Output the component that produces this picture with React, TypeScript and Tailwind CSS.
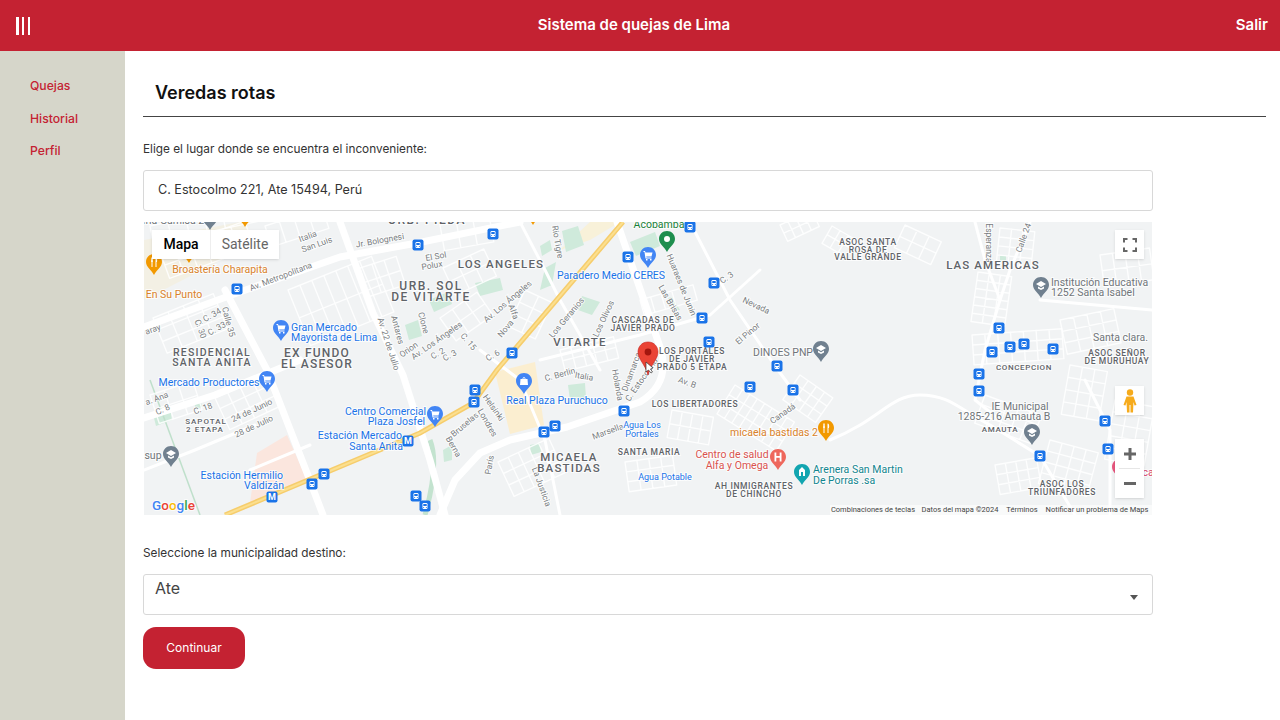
const RED = "#c42232";

type Label = [string, number, number, number?, string?];

// [text, cx, cy, rotate]
const streets: Label[] = [
  ["Av. Metropolitana", 281, 277, -21],
  ["Italia", 308, 237, -20],
  ["San Luis", 317, 245, -20],
  ["Jr. Bolognesi", 380, 241, -10],
  ["El Sol", 436, 257, -10],
  ["Polux", 432, 266, -10],
  ["Av. 22 de Julio", 388, 344, 72],
  ["Antares", 397, 330, 75],
  ["Clone", 423, 323, 75],
  ["Orion", 409, 350, -35],
  ["Av. Los Ángeles", 437, 341, -35],
  ["C. 2", 438, 354, -30],
  ["C. 3", 450, 356, -30],
  ["C. 15", 468, 342, 50],
  ["C. C. 34", 208, 318, -30],
  ["C. 33", 217, 329, -30],
  ["C. 30", 200, 329, 70],
  ["Calle 35", 228, 322, 75],
  ["aray", 153, 330, -20],
  ["a. Ana", 157, 399, -20],
  ["C. 8", 163, 410, -25],
  ["C. 18", 203, 409, -20],
  ["24 de Junio", 252, 411, -25],
  ["28 de Julio", 254, 427, -25],
  ["Bruselas", 465, 425, -40],
  ["Berna", 453, 447, 60],
  ["Rio Tigre", 557, 242, 80],
  ["Huaraes de Junin", 681, 285, 68],
  ["Las Brisas", 670, 303, 60],
  ["C. 3", 727, 278, -35],
  ["Nevada", 756, 306, 25],
  ["El Pinor", 748, 334, -40],
  ["Los Geranios", 567, 318, -50],
  ["Los Olivos", 604, 319, -65],
  ["Av. Los Ángeles", 508, 302, -40],
  ["Alfa", 513, 312, 70],
  ["Nova", 506, 329, -50],
  ["C. 6", 493, 356, -30],
  ["C. Berlin", 560, 375, -15],
  ["Italia", 584, 377, 10],
  ["Holanda", 617, 385, 80],
  ["Dinamarca", 632, 372, -70],
  ["C. Estocolmo", 642, 380, -55],
  ["Av. B", 687, 383, 20],
  ["Canadá", 783, 414, -35],
  ["Marsella", 608, 432, -20],
  ["La Justicia", 541, 487, 70],
  ["París", 490, 465, -80],
  ["Helsinki", 493, 408, 55],
  ["Londres", 487, 423, 60],
  ["Esperanza", 988, 243, 90],
  ["Calle 24", 1024, 238, -70],
];

// [text, cx, cy, font size, spacing]
const areas: [string, number, number, number, number][] = [
  ["URB. PIEDA", 427, 221, 12, 1.5],
  ["LOS ANGELES", 501, 265, 11.5, 1.2],
  ["URB. SOL", 431, 287, 12, 1.5],
  ["DE VITARTE", 431, 298, 12, 1.5],
  ["RESIDENCIAL", 212, 353, 10.5, 1.2],
  ["SANTA ANITA", 212, 363, 10.5, 1.2],
  ["EX FUNDO", 317, 354, 12, 1.2],
  ["EL ASESOR", 317, 365, 12, 1.2],
  ["SAPOTAL", 206, 422, 8, 1],
  ["2 ETAPA", 205, 430, 8, 1],
  ["CASCADAS DE", 643, 321, 8.5, 0.6],
  ["JAVIER PRADO", 643, 329, 8.5, 0.6],
  ["VITARTE", 580, 343, 11.5, 1.2],
  ["LOS PORTALES", 692, 352, 8.5, 0.6],
  ["DE JAVIER", 692, 360, 8.5, 0.6],
  ["PRADO 5 ETAPA", 692, 368, 8.5, 0.6],
  ["LOS LIBERTADORES", 695, 405, 8.5, 0.6],
  ["SANTA MARIA", 649, 453, 8.5, 0.6],
  ["AH INMIGRANTES", 754, 487, 8.5, 0.6],
  ["DE CHINCHO", 754, 495, 8.5, 0.6],
  ["MICAELA", 569, 458, 11.5, 1.2],
  ["BASTIDAS", 569, 468.5, 11.5, 1.2],
  ["ASOC SANTA", 868, 243, 8.5, 0.6],
  ["ROSA DE", 868, 250.5, 8.5, 0.6],
  ["VALLE GRANDE", 868, 258, 8.5, 0.6],
  ["LAS AMERICAS", 993, 266, 11.5, 1.1],
  ["ASOC SEÑOR", 1117, 354, 8.5, 0.6],
  ["DE MURUHUAY", 1117, 361.5, 8.5, 0.6],
  ["CONCEPCION", 1024, 368, 8, 0.6],
  ["AMAUTA", 1000, 430, 8, 0.6],
  ["ASOC LOS", 1062, 485, 8.5, 0.6],
  ["TRIUNFADORES", 1062, 492.5, 8.5, 0.6],
];

const BLUE = "#1a73e8";
const ORANGE = "#d9822b";
const GREY = "#70757a";
const TEAL = "#12858f";
const ROSE = "#d9534f";

// [text, x, cy, colour, anchor, size]
const places: [string, number, number, string, "start" | "middle" | "end", number?][] = [
  ["ería Gamisa 2", 172, 221, GREY, "middle"],
  ["Broastería Charapita", 220, 270, ORANGE, "middle"],
  ["En Su Punto", 174, 295, ORANGE, "middle"],
  ["Gran Mercado", 291, 328, BLUE, "start"],
  ["Mayorista de Lima", 291, 338, BLUE, "start"],
  ["Mercado Productores", 209, 383, BLUE, "middle"],
  ["sup", 153, 456, GREY, "middle"],
  ["Estación Hermilio", 283, 476, BLUE, "end"],
  ["Valdizán", 284, 486, BLUE, "end"],
  ["Centro Comercial", 426, 412, BLUE, "end"],
  ["Plaza Josfel", 425, 422, BLUE, "end"],
  ["Estación Mercado", 402, 436.5, BLUE, "end"],
  ["Santa Anita", 403, 447, BLUE, "end"],
  ["Acobamba", 659, 225, "#188038", "middle"],
  ["Paradero Medio CERES", 611, 276, BLUE, "middle"],
  ["DINOES PNP", 783, 353, GREY, "middle"],
  ["Real Plaza Puruchuco", 557, 401, BLUE, "middle"],
  ["micaela bastidas 2", 774, 433, ORANGE, "middle"],
  ["Agua Los", 642, 426, BLUE, "middle", 9],
  ["Portales", 642, 434.5, BLUE, "middle", 9],
  ["Centro de salud", 732, 455, ROSE, "middle"],
  ["Alfa y Omega", 737, 466, ROSE, "middle"],
  ["Agua Potable", 665, 478, BLUE, "middle", 9],
  ["Arenera San Martin", 813, 470, TEAL, "start"],
  ["De Porras .sa", 813, 481, TEAL, "start"],
  ["Institución Educativa", 1051, 283, GREY, "start"],
  ["1252 Santa Isabel", 1051, 293, GREY, "start"],
  ["Santa clara.", 1093, 338, GREY, "start"],
  ["IE Municipal", 1020, 407, GREY, "middle"],
  ["1285-216 Amauta B", 1004, 417.5, GREY, "middle"],
  ["ca", 1148, 473, "#d6456b", "middle"],
];

const busStops = [
  [493, 234], [690, 227], [628, 257], [714, 283], [702, 318], [709, 342], [512, 353], [777, 366],
  [750, 387], [793, 390], [624, 411], [555, 426], [544, 432], [475, 390], [474, 402], [324, 474],
  [312, 484], [416, 496], [425, 506], [418, 245], [237, 289], [999, 328], [1010, 347], [1024, 344],
  [992, 352], [1053, 349], [979, 374], [979, 391], [1105, 421], [1108, 449], [1040, 456],
];

// main roads, wide white bands
const roads = [
  "M144 327 L237 293 L340 257 L417 243 L520 222",
  "M340 222 L373 313 L403 375 L430 460 L445 515",
  "M225 290 L267 370 L307 473 L323 515",
  "M617 222 L660 347 C668 372 660 390 640 402 L567 427 L510 440 L480 453 L455 480 L440 515",
  "M144 418 L215 395 L300 360",
];

const lanes = [
  "M690 222 L730 300 L775 366 L800 400",
  "M520 222 L545 270 L560 300 L600 370",
  "M480 350 L520 380 L545 440 L560 515",
  "M540 360 L640 335 L710 315 L760 270",
  "M830 440 C880 420 890 395 920 395 C950 395 960 410 990 425 L1040 456 L1075 515",
  "M975 222 L985 260 L1000 300 L985 350 L975 400 L1000 420",
  "M1030 222 L1010 270 L1000 300",
  "M1040 300 L1152 310",
  "M1085 380 L1110 430 L1110 515",
  "M144 470 L195 450 L255 425",
  "M250 470 L310 445",
];

// a small rotated street grid, returned as one path
function mesh(x: number, y: number, w: number, h: number, rot: number, nx: number, ny: number) {
  const a = (rot * Math.PI) / 180;
  const pt = (u: number, v: number) => `${(x + u * Math.cos(a) - v * Math.sin(a)).toFixed(1)} ${(y + u * Math.sin(a) + v * Math.cos(a)).toFixed(1)}`;
  let d = "";
  for (let i = 0; i <= nx; i++) d += `M${pt((w * i) / nx, 0)} L${pt((w * i) / nx, h)} `;
  for (let j = 0; j <= ny; j++) d += `M${pt(0, (h * j) / ny)} L${pt(w, (h * j) / ny)} `;
  return d;
}

const meshes = [
  // right hand hills
  mesh(978, 272, 34, 50, 8, 3, 6),
  mesh(972, 335, 90, 30, -4, 7, 3),
  mesh(1060, 320, 55, 35, -12, 4, 3),
  mesh(985, 395, 60, 30, 20, 5, 3),
  mesh(1050, 440, 50, 45, 15, 4, 4),
  mesh(995, 465, 42, 30, -10, 4, 3),
  mesh(1070, 365, 38, 50, 10, 3, 4),
  mesh(1000, 228, 35, 36, 6, 3, 4),
  mesh(1115, 400, 40, 60, 10, 3, 5),
  mesh(1100, 255, 50, 32, -8, 4, 2),
  // upper middle hills
  mesh(832, 226, 28, 20, 30, 3, 2),
  mesh(905, 225, 40, 25, 25, 3, 2),
  mesh(780, 225, 35, 18, -25, 4, 2),
  // libertadores
  mesh(735, 385, 70, 34, 32, 8, 3),
  mesh(800, 375, 40, 30, 35, 4, 3),
  mesh(672, 410, 42, 28, 10, 4, 2),
  // santa maria
  mesh(625, 462, 48, 30, -8, 4, 3),
  mesh(498, 462, 56, 38, -25, 5, 3),
  // vitarte
  mesh(560, 350, 55, 22, -14, 5, 2),
  mesh(640, 300, 55, 16, -16, 5, 1),
  mesh(525, 290, 30, 40, 25, 2, 3),
  mesh(440, 318, 45, 28, -35, 3, 2),
  mesh(443, 268, 45, 30, -25, 3, 2),
  mesh(360, 268, 38, 30, -18, 3, 2),
  // west blocks
  mesh(288, 290, 90, 60, -22, 7, 2),
  mesh(153, 318, 65, 38, -22, 4, 3),
  mesh(215, 398, 55, 35, -25, 4, 3),
  mesh(160, 252, 90, 28, -20, 6, 2),
  mesh(150, 226, 110, 18, -12, 6, 1),
  mesh(265, 226, 60, 22, -18, 4, 1),
  mesh(150, 395, 45, 30, -18, 3, 2),
  mesh(440, 225, 50, 26, -10, 3, 2),
];

const blocks = [
  "M475 283 L500 278 L503 290 L480 296 Z",
  "M562 231 L578 226 L584 245 L566 252 Z",
  "M630 242 L655 232 L660 246 L636 256 Z",
  "M545 268 L556 262 L552 285 L540 290 Z",
  "M582 296 L600 302 L592 315 L578 310 Z",
  "M540 246 L550 240 L552 250 L542 256 Z",
  "M429 300 L448 292 L452 304 L434 312 Z",
  "M405 325 L418 320 L422 336 L409 340 Z",
  "M153 414 L170 408 L172 420 L156 426 Z",
  "M193 400 L200 398 L202 407 L196 409 Z",
  "M530 445 L540 443 L541 452 L531 455 Z",
  "M568 385 L585 383 L586 398 L570 400 Z",
  "M443 450 L452 445 L452 460 L444 462 Z",
  "M1000 256 L1006 256 L1006 262 L1000 262 Z",
  "M675 310 L668 298 L672 297 L680 310 Z",
];

// teardrop with tip at (x, y)
function Pin({ x, y, fill, glyph }: { x: number; y: number; fill: string; glyph: string }) {
  return (
    <g transform={`translate(${x - 8} ${y - 21})`}>
      <path d="M8 0 C3.5 0 0 3.5 0 8 C0 13 5.5 16 8 21 C10.5 16 16 13 16 8 C16 3.5 12.5 0 8 0 Z" fill={fill} />
      <path d={glyph} fill="#fff" />
    </g>
  );
}

const CART = "M3.5 4 H5 L5.5 5.5 H12.5 L11.5 9.5 H6.2 L6.5 10.5 H11.5 V11.5 H5.5 L4.5 5 H3.5 Z M6 12 h1.5 v1.5 h-1.5 Z M10 12 h1.5 v1.5 h-1.5 Z";
const CAP = "M8 4 L13 7 L8 10 L3 7 Z M5 9.5 L8 11.3 L11 9.5 V11.5 L8 13 L5 11.5 Z";
const DOT = "M8 5 A3 3 0 1 0 8 11 A3 3 0 1 0 8 5 Z";
const FORK = "M5 3.5 H5.7 V6.5 H6.3 V3.5 H7 V7.5 L6.5 8 V13 H5.5 V8 L5 7.5 Z M9.5 3.5 C11 3.5 11.5 5.5 11 8 H10.5 V13 H9.5 Z";
const BAG = "M4.5 6 H11.5 L12 12 H4 Z M6.5 6 C6.5 3.5 9.5 3.5 9.5 6 H8.8 C8.8 4.5 7.2 4.5 7.2 6 Z";
const HOSP = "M4.5 3.5 H6.3 V7 H9.7 V3.5 H11.5 V12.5 H9.7 V8.7 H6.3 V12.5 H4.5 Z";
const CHURCH = "M8 3 L11 6 V12 H5 V6 Z M7 8 V12 H9 V8 Z";

function BusStop({ x, y }: { x: number; y: number }) {
  return (
    <g transform={`translate(${x - 5.5} ${y - 5.5})`}>
      <rect width="11" height="11" rx="2" fill={BLUE} />
      <rect x="3" y="2.5" width="5" height="6" rx="1.2" fill="#fff" />
      <rect x="3.8" y="3.5" width="3.4" height="2" fill={BLUE} />
      <rect x="3.7" y="6.6" width="0.9" height="0.9" fill={BLUE} />
      <rect x="6.4" y="6.6" width="0.9" height="0.9" fill={BLUE} />
    </g>
  );
}

function MapDrawing() {
  const halo = { paintOrder: "stroke" as const, stroke: "#fff", strokeWidth: 2, strokeOpacity: 0.75 };
  return (
    <svg viewBox="144 222 1008 293" className="block h-full w-full bg-[#f1f3f4] font-['Roboto',sans-serif]">
      <path d="M495 372 L535 362 L544 425 L510 434 Z" fill="#fbeed0" />
      <path d="M620 222 L590 222 L560 250 L590 240 Z" fill="#f8f1d9" />
      <path d="M257 453 L287 435 L307 480 L250 503 Z" fill="#fbe6de" />
      <path d="M144 240 L240 222 L260 240 L144 300 Z" fill="#f3f0e4" />
      {blocks.map((d) => (
        <path key={d} d={d} fill="#cfeadb" />
      ))}
      <path d="M150 380 L200 515" stroke="#bfe0cb" strokeWidth="1.5" fill="none" />
      <path d="M425 515 C432 490 438 460 430 440" stroke="#c3e3cf" strokeWidth="5" fill="none" />
      <g fill="none" stroke="#fff" strokeLinejoin="round" strokeLinecap="round">
        {meshes.map((d) => (
          <path key={d} d={d} strokeWidth="1.4" strokeOpacity="0.85" />
        ))}
        {lanes.map((d) => (
          <path key={d} d={d} strokeWidth="3" />
        ))}
        {roads.map((d) => (
          <path key={d} d={d} strokeWidth="7" />
        ))}
      </g>
      <path d="M225 515 L420 433 L473 403 L497 370 L623 222" fill="none" stroke="#f6cd6c" strokeWidth="5" />
      <path d="M225 515 L420 433 L473 403 L497 370 L623 222" fill="none" stroke="#fbdf8f" strokeWidth="2" />

      {streets.map(([text, x, y, rot]) => (
        <text
          key={`${text}${x}`}
          x={x}
          y={y}
          transform={`rotate(${rot} ${x} ${y})`}
          textAnchor="middle"
          dominantBaseline="middle"
          fontSize="8.5"
          fill="#7a7e82"
          style={halo}
        >
          {text}
        </text>
      ))}
      {areas.map(([text, x, y, size, gap]) => (
        <text
          key={text}
          x={x}
          y={y}
          textAnchor="middle"
          dominantBaseline="middle"
          fontSize={size}
          fontWeight="500"
          letterSpacing={gap}
          fill="#5f6368"
          style={halo}
        >
          {text}
        </text>
      ))}
      {places.map(([text, x, y, color, anchor, size]) => (
        <text
          key={`${text}${x}`}
          x={x}
          y={y}
          textAnchor={anchor}
          dominantBaseline="middle"
          fontSize={size ?? 10.5}
          fill={color}
          style={halo}
        >
          {text}
        </text>
      ))}

      {busStops.map(([x, y]) => (
        <BusStop key={`${x}-${y}`} x={x} y={y} />
      ))}
      {[[408, 441], [272, 497]].map(([x, y]) => (
        <g key={x}>
          <rect x={x - 5.5} y={y - 5.5} width="11" height="11" rx="2" fill={BLUE} />
          <text x={x} y={y + 0.5} textAnchor="middle" dominantBaseline="middle" fontSize="9" fontWeight="700" fill="#fff">
            M
          </text>
        </g>
      ))}

      <Pin x={210} y={230} fill="#70808f" glyph={CAP} />
      <Pin x={245} y={227} fill="#f29900" glyph={FORK} />
      <Pin x={533} y={225} fill="#f29900" glyph={FORK} />
      <Pin x={189} y={263} fill="#f29900" glyph={FORK} />
      <Pin x={154} y={275} fill="#f29900" glyph={FORK} />
      <Pin x={281} y={341} fill="#4285f4" glyph={CART} />
      <Pin x={267} y={392} fill="#4285f4" glyph={CART} />
      <Pin x={171} y={467} fill="#70808f" glyph={CAP} />
      <Pin x={435} y={427} fill="#4285f4" glyph={CART} />
      <Pin x={667} y={252} fill="#1e8e4e" glyph={DOT} />
      <Pin x={648} y={268} fill="#4285f4" glyph={CART} />
      <Pin x={821} y={362} fill="#70808f" glyph={CAP} />
      <Pin x={524} y={394} fill="#4285f4" glyph={BAG} />
      <Pin x={826} y={441} fill="#f29900" glyph={FORK} />
      <Pin x={778} y={470} fill="#ee675c" glyph={HOSP} />
      <Pin x={802} y={485} fill="#12a5b0" glyph={CHURCH} />
      <Pin x={1041} y={298} fill="#70808f" glyph={CAP} />
      <Pin x={1032} y={445} fill="#70808f" glyph={CAP} />
      <Pin x={1120} y={480} fill="#e8577e" glyph="" />

      {/* selected place */}
      <path
        d="M648 342 C641.5 342 638 347 638 352 C638 359 645 364 648 375 C651 364 658 359 658 352 C658 347 654.5 342 648 342 Z"
        fill="#ea4335"
        stroke="#c5221f"
        strokeWidth="0.6"
      />
      <circle cx="648" cy="352" r="3.4" fill="#a3160f" />
      <path d="M646 362 L646 372 L648.5 370 L651 373 L652.5 372 L650.5 369 L653 368 Z" fill="#fff" stroke="#333" strokeWidth="0.7" />

      {/* logo */}
      <text x="152" y="510" fontSize="13.5" fontWeight="500" style={halo}>
        <tspan fill="#4285f4">G</tspan>
        <tspan fill="#ea4335">o</tspan>
        <tspan fill="#fbbc04">o</tspan>
        <tspan fill="#4285f4">g</tspan>
        <tspan fill="#34a853">l</tspan>
        <tspan fill="#ea4335">e</tspan>
      </text>

      <rect x="830" y="505" width="322" height="10" fill="#fff" fillOpacity="0.55" />
      {[
        ["Combinaciones de teclas", 873],
        ["Datos del mapa ©2024", 960],
        ["Términos", 1022],
        ["Notificar un problema de Maps", 1097],
      ].map(([text, x]) => (
        <text key={text} x={x} y={510.5} textAnchor="middle" dominantBaseline="middle" fontSize="7.5" fill="#444">
          {text}
        </text>
      ))}
    </svg>
  );
}

function MapControls() {
  return (
    <>
      <div className="absolute left-[8px] top-[8px] flex h-[29px] bg-white font-['Roboto',sans-serif] text-[14px] shadow-sm">
        <div className="flex w-[58px] items-center justify-center font-medium text-black">Mapa</div>
        <div className="flex w-[69px] items-center justify-center border-l border-[#eee] text-[#666]">Satélite</div>
      </div>
      <div className="absolute right-[8px] top-[8px] flex h-[29px] w-[29px] items-center justify-center bg-white shadow-sm">
        <svg width="14" height="14" viewBox="0 0 14 14" fill="none" stroke="#666" strokeWidth="2">
          <path d="M1 4.5 V1 H4.5 M9.5 1 H13 V4.5 M1 9.5 V13 H4.5 M9.5 13 H13 V9.5" />
        </svg>
      </div>
      <div className="absolute bottom-[17px] right-[8px] flex w-[29px] flex-col gap-[24px]">
        <div className="flex h-[29px] items-center justify-center bg-white shadow-sm">
          <svg width="14" height="24" viewBox="0 0 14 24" fill="#f6ab1c">
            <circle cx="7" cy="3.5" r="3.2" />
            <path d="M3.5 7.5 H10.5 L13.5 16 L11.5 16.5 L10.5 13 L10 23.5 H7.5 V16 H6.5 V23.5 H4 L3.5 13 L2.5 16.5 L0.5 16 Z" />
          </svg>
        </div>
        <div className="flex h-[59px] flex-col items-center bg-white shadow-sm">
          <div className="flex h-[29px] w-full items-center justify-center">
            <svg width="14" height="14" viewBox="0 0 14 14" fill="#666">
              <path d="M5.5 1 H8.5 V5.5 H13 V8.5 H8.5 V13 H5.5 V8.5 H1 V5.5 H5.5 Z" />
            </svg>
          </div>
          <div className="h-px w-[21px] bg-[#e6e6e6]" />
          <div className="flex h-[29px] w-full items-center justify-center">
            <div className="h-[3px] w-[12px] bg-[#666]" />
          </div>
        </div>
      </div>
    </>
  );
}

export default function App() {
  return (
    <div className="flex h-screen flex-col overflow-hidden bg-white font-['Inter',sans-serif] text-[#333]">
      <header className="flex h-[51px] shrink-0 items-center justify-between bg-[#c42232] pl-[16px] pr-[12px] text-white">
        <div className="flex h-[18px] w-[14px] justify-between">
          <span className="w-[2.5px] bg-white" />
          <span className="w-[2.5px] bg-white" />
          <span className="w-[2.5px] bg-white" />
        </div>
        <h1 className="ml-[2px] text-[15px] font-semibold">Sistema de quejas de Lima</h1>
        <a className="text-[15px] font-semibold">Salir</a>
      </header>

      <div className="flex min-h-0 flex-1">
        <aside className="flex w-[125px] shrink-0 flex-col gap-[12.5px] bg-[#d6d6ca] pl-[30px] pt-[25px] text-[12.2px] font-medium" style={{ color: RED }}>
          <a className="leading-[20px]">Quejas</a>
          <a className="leading-[20px]">Historial</a>
          <a className="leading-[20px]">Perfil</a>
        </aside>

        <main className="flex-1 pl-[18px] pr-[14px]">
          <h2 className="border-b border-[#444] pb-[11px] pl-[12px] pt-[30px] text-[18px] font-semibold leading-[24px] text-[#111]">
            Veredas rotas
          </h2>

          <div className="w-[1010px]">
            <p className="mt-[22px] text-[11.8px] leading-[20px]">Elige el lugar donde se encuentra el inconveniente:</p>
            <input
              readOnly
              value="C. Estocolmo 221, Ate 15494, Perú"
              className="mt-[11px] block h-[41px] w-full rounded-[3px] border border-[#d8d8d8] pb-[3px] pl-[14px] text-[12.6px] text-[#333]"
            />

            <div className="relative mx-px mt-[11px] h-[293px]">
              <MapDrawing />
              <MapControls />
            </div>

            <p className="mt-[28px] text-[11.8px] leading-[20px]">Seleccione la municipalidad destino:</p>
            <div className="relative mt-[11px] h-[41px] rounded-[3px] border border-[#d8d8d8] pl-[11px] pt-[2px] text-[16px] leading-[22px] text-[#444]">
              Ate
              <span className="absolute right-[14px] top-[20px] h-0 w-0 border-x-[4px] border-t-[5px] border-x-transparent border-t-[#555]" />
            </div>
            <button className="mt-[12px] h-[42px] w-[102px] rounded-[13px] bg-[#c42232] text-[12px] font-normal text-white">
              Continuar
            </button>
          </div>
        </main>
      </div>
    </div>
  );
}
